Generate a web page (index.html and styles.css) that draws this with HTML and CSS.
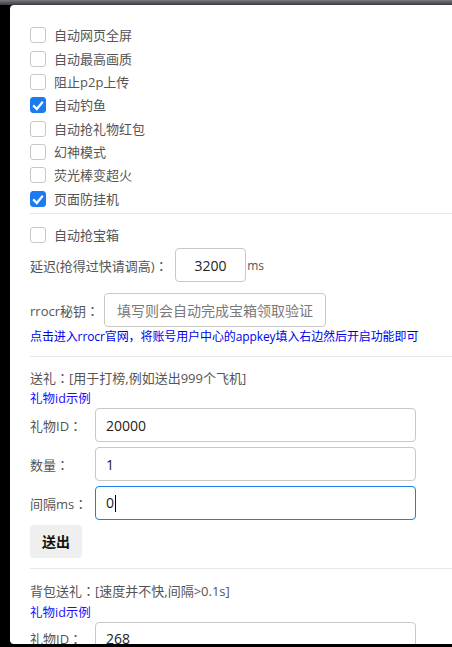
FILE: index.html
```html
<!DOCTYPE html>
<html lang="zh-CN">
<head>
<meta charset="utf-8">
<link rel="stylesheet" href="styles.css">
</head>
<body>
<div class="topbar"></div>
<div class="panel">
  <div class="checks">
    <div class="check"><span class="box"></span><span>自动网页全屏</span></div>
    <div class="check"><span class="box"></span><span>自动最高画质</span></div>
    <div class="check"><span class="box"></span><span>阻止p2p上传</span></div>
    <div class="check"><span class="box on"><svg viewBox="0 0 16 16" width="16" height="16"><polyline points="3.2,8.4 6.8,12 12.8,4.8" fill="none" stroke="#fff" stroke-width="2.2"/></svg></span><span>自动钓鱼</span></div>
    <div class="check"><span class="box"></span><span>自动抢礼物红包</span></div>
    <div class="check"><span class="box"></span><span>幻神模式</span></div>
    <div class="check"><span class="box"></span><span>荧光棒变超火</span></div>
    <div class="check"><span class="box on"><svg viewBox="0 0 16 16" width="16" height="16"><polyline points="3.2,8.4 6.8,12 12.8,4.8" fill="none" stroke="#fff" stroke-width="2.2"/></svg></span><span>页面防挂机</span></div>
  </div>
  <div class="sep sep1"></div>
  <div class="check chest"><span class="box"></span><span>自动抢宝箱</span></div>
  <div class="row delay">
    <span class="lbl-inline">延迟(抢得过快请调高)<span class="colon" lang="zh-TW">：</span></span>
    <input class="field small" type="text" value="3200">
    <span class="unit">ms</span>
  </div>
  <div class="row rrocr">
    <span class="lbl-inline">rrocr秘钥<span class="colon" lang="zh-TW">：</span></span>
    <input class="field key" type="text" placeholder="填写则会自动完成宝箱领取验证">
  </div>
  <div class="note">点击进入rrocr官网，将账号用户中心的appkey填入右边然后开启功能即可</div>
  <div class="sep sep2"></div>
  <div class="title t1">送礼<span class="colon" lang="zh-TW">：</span>[用于打榜,例如送出999个飞机]</div>
  <div class="link l1">礼物id示例</div>
  <div class="form">
    <div class="row"><span class="lbl">礼物ID<span class="colon" lang="zh-TW">：</span></span><input class="field wide" type="text" value="20000"></div>
    <div class="row"><span class="lbl">数量<span class="colon" lang="zh-TW">：</span></span><input class="field wide" type="text" value="1"></div>
    <div class="row"><span class="lbl">间隔ms<span class="colon" lang="zh-TW">：</span></span><div class="field wide focused">0<span class="caret"></span></div></div>
  </div>
  <button class="btn">送出</button>
  <div class="sep sep3"></div>
  <div class="title t2">背包送礼<span class="colon" lang="zh-TW">：</span>[速度并不快,间隔&gt;0.1s]</div>
  <div class="link l2">礼物id示例</div>
  <div class="row"><span class="lbl">礼物ID<span class="colon" lang="zh-TW">：</span></span><input class="field wide" type="text" value="268"></div>
</div>
</body>
</html>
```
FILE: styles.css
```css
html, body {
  margin: 0;
  padding: 0;
}
body {
  background: #000;
  height: 647px;
  overflow: hidden;
  font-family: "Open Sans", "Noto Sans CJK SC", sans-serif;
}
.topbar {
  height: 5px;
  background: linear-gradient(#7a7a7e, #3a3a3e);
}
.panel {
  margin-left: 10px;
  height: 639px;
  box-sizing: border-box;
  padding: 22.33px 0 0 20px;
  background: #fff;
  border-radius: 4px 0 0 4px;
  overflow: hidden;
  color: #555;
  font-size: 13px;
}
.colon {
  font-family: "Noto Sans CJK TC", sans-serif;
  font-feature-settings: "locl" 0;
}
.checks {
  display: flex;
  flex-direction: column;
  gap: 7.33px;
}
.check {
  display: flex;
  align-items: center;
  height: 16px;
  line-height: 16px;
  white-space: nowrap;
}
.box {
  width: 16px;
  height: 16px;
  box-sizing: border-box;
  border: 1px solid #c8c8c8;
  border-radius: 3px;
  margin-right: 8px;
  flex: none;
  position: relative;
}
.box.on {
  background: #1a7cf0;
  border-color: #1a7cf0;
}
.box svg {
  position: absolute;
  left: -1px;
  top: -1px;
}
.sep {
  height: 1px;
  background: #e8e8e8;
}
.sep1 { margin-top: 6.33px; }
.chest { margin-top: 13px; }
.row {
  display: flex;
  align-items: center;
  white-space: nowrap;
}
.delay { margin-top: 5.3px; }
.rrocr { margin-top: 11px; }
.lbl-inline {
  margin-right: 5px;
}
.delay .lbl-inline { margin-right: 7px; }
.lbl {
  width: 65px;
  flex: none;
}
.field {
  box-sizing: border-box;
  height: 34px;
  border: 1px solid #c8c8c8;
  border-radius: 4px;
  font-family: "Open Sans", "Noto Sans CJK SC", sans-serif;
  font-size: 14px;
  color: #222;
  background: #fff;
  outline: none;
  margin: 0;
}
.small {
  width: 71.5px;
  text-align: center;
  padding: 0;
}
.unit {
  font-size: 12px;
  margin-left: 1px;
  color: #555;
}
.key {
  width: 221.5px;
  padding: 0 0 0 12px;
}
.key::placeholder {
  color: #7a7a7a;
}
.wide {
  width: 321px;
  padding: 0 0 0 10px;
}
.focused {
  border-color: #1f7bf2;
  display: flex;
  align-items: center;
  line-height: 20px;
}
.caret {
  display: inline-block;
  width: 1px;
  height: 17px;
  background: #000;
  margin-left: 0.5px;
}
.note {
  margin-top: 1.7px;
  font-size: 12px;
  line-height: 16px;
  color: #0000ee;
  white-space: nowrap;
  letter-spacing: -0.1px;
}
.sep2 { margin-top: 11px; }
.title {
  line-height: 18px;
  white-space: nowrap;
}
.t1 { margin-top: 12px; }
.link {
  font-size: 12.5px;
  line-height: 18px;
  color: #1a0dff;
  white-space: nowrap;
}
.l1 { margin-top: 3px; }
.form {
  margin-top: 0.3px;
  display: flex;
  flex-direction: column;
  gap: 5px;
}
.btn {
  display: block;
  margin-top: 4.7px;
  height: 33px;
  width: 52px;
  padding: 0;
  border: none;
  border-radius: 4px;
  background: #efefef;
  color: #111;
  font-family: "Open Sans", "Noto Sans CJK SC", sans-serif;
  font-size: 14px;
  font-weight: bold;
}
.sep3 { margin-top: 10px; }
.t2 { margin-top: 12.7px; }
.l2 { margin-top: 4px; }
```
